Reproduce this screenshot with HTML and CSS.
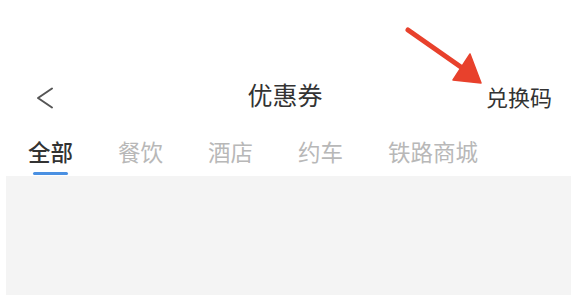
FILE: index.html
```html
<!DOCTYPE html>
<html lang="zh-CN">
<head>
<meta charset="utf-8">
<title>优惠券</title>
<link rel="stylesheet" href="styles.css">
</head>
<body>
<div class="page">
  <div class="status"></div>
  <header class="nav">
    <div class="nav-left">
      <svg class="back" width="18" height="22" viewBox="0 0 18 22" aria-hidden="true">
        <polyline points="16,1.5 2,11 16,20.5" fill="none" stroke="#555" stroke-width="2" stroke-linecap="round" stroke-linejoin="round"/>
      </svg>
    </div>
    <h1 class="title">优惠券</h1>
    <div class="nav-right"><span class="redeem">兑换码</span></div>
  </header>
  <nav class="tabs">
    <div class="tab active"><span class="tab-text">全部</span><span class="bar"></span></div>
    <div class="tab"><span class="tab-text">餐饮</span><span class="bar"></span></div>
    <div class="tab"><span class="tab-text">酒店</span><span class="bar"></span></div>
    <div class="tab"><span class="tab-text">约车</span><span class="bar"></span></div>
    <div class="tab"><span class="tab-text">铁路商城</span><span class="bar"></span></div>
  </nav>
  <main class="content"></main>
  <svg class="arrow" width="90" height="68" viewBox="0 0 90 68" aria-hidden="true">
    <line x1="8" y1="8" x2="68" y2="50" stroke="#e8412c" stroke-width="5" stroke-linecap="round"/>
    <polygon points="81,61 53,58 70,32" fill="#e8412c" stroke="#e8412c" stroke-width="1.5" stroke-linejoin="round"/>
  </svg>
</div>
</body>
</html>
```

FILE: styles.css
```css
html, body {
  margin: 0;
  padding: 0;
  background: #ffffff;
}

.page {
  position: relative;
  width: 580px;
  height: 295px;
  overflow: hidden;
  background: #ffffff;
  font-family: "Noto Sans CJK SC", "Noto Sans", sans-serif;
  display: flex;
  flex-direction: column;
}

.status {
  height: 75px;
  flex: none;
}

.nav {
  height: 40px;
  flex: none;
  display: grid;
  grid-template-columns: 1fr auto 1fr;
  align-items: center;
  padding: 0 28px 0 18px;
}

.nav-left {
  display: flex;
  align-items: center;
  padding-left: 18px;
  padding-top: 6px;
}

.back {
  display: block;
}

.title {
  margin: -2px 0 0;
  font-size: 25px;
  line-height: 25px;
  font-weight: normal;
  color: #333333;
}

.nav-right {
  display: flex;
  justify-content: flex-end;
  padding-top: 2px;
}

.redeem {
  font-size: 22px;
  line-height: 22px;
  color: #333333;
}

.tabs {
  flex: none;
  display: flex;
  gap: 45px;
  padding: 25px 0 1px 28px;
}

.tab {
  display: flex;
  flex-direction: column;
  align-items: center;
}

.tab-text {
  font-size: 22.5px;
  line-height: 23px;
  color: #b8b8b8;
}

.bar {
  width: 35px;
  height: 3px;
  margin-top: 9px;
  border-radius: 2px;
  background: transparent;
}

.tab.active .tab-text {
  color: #333333;
  font-weight: 500;
}

.tab.active .bar {
  background: #4a90e2;
}

.content {
  flex: 1;
  margin: 0 9px 0 6px;
  background: #f4f4f4;
}

.arrow {
  position: absolute;
  left: 400px;
  top: 22px;
}
```
